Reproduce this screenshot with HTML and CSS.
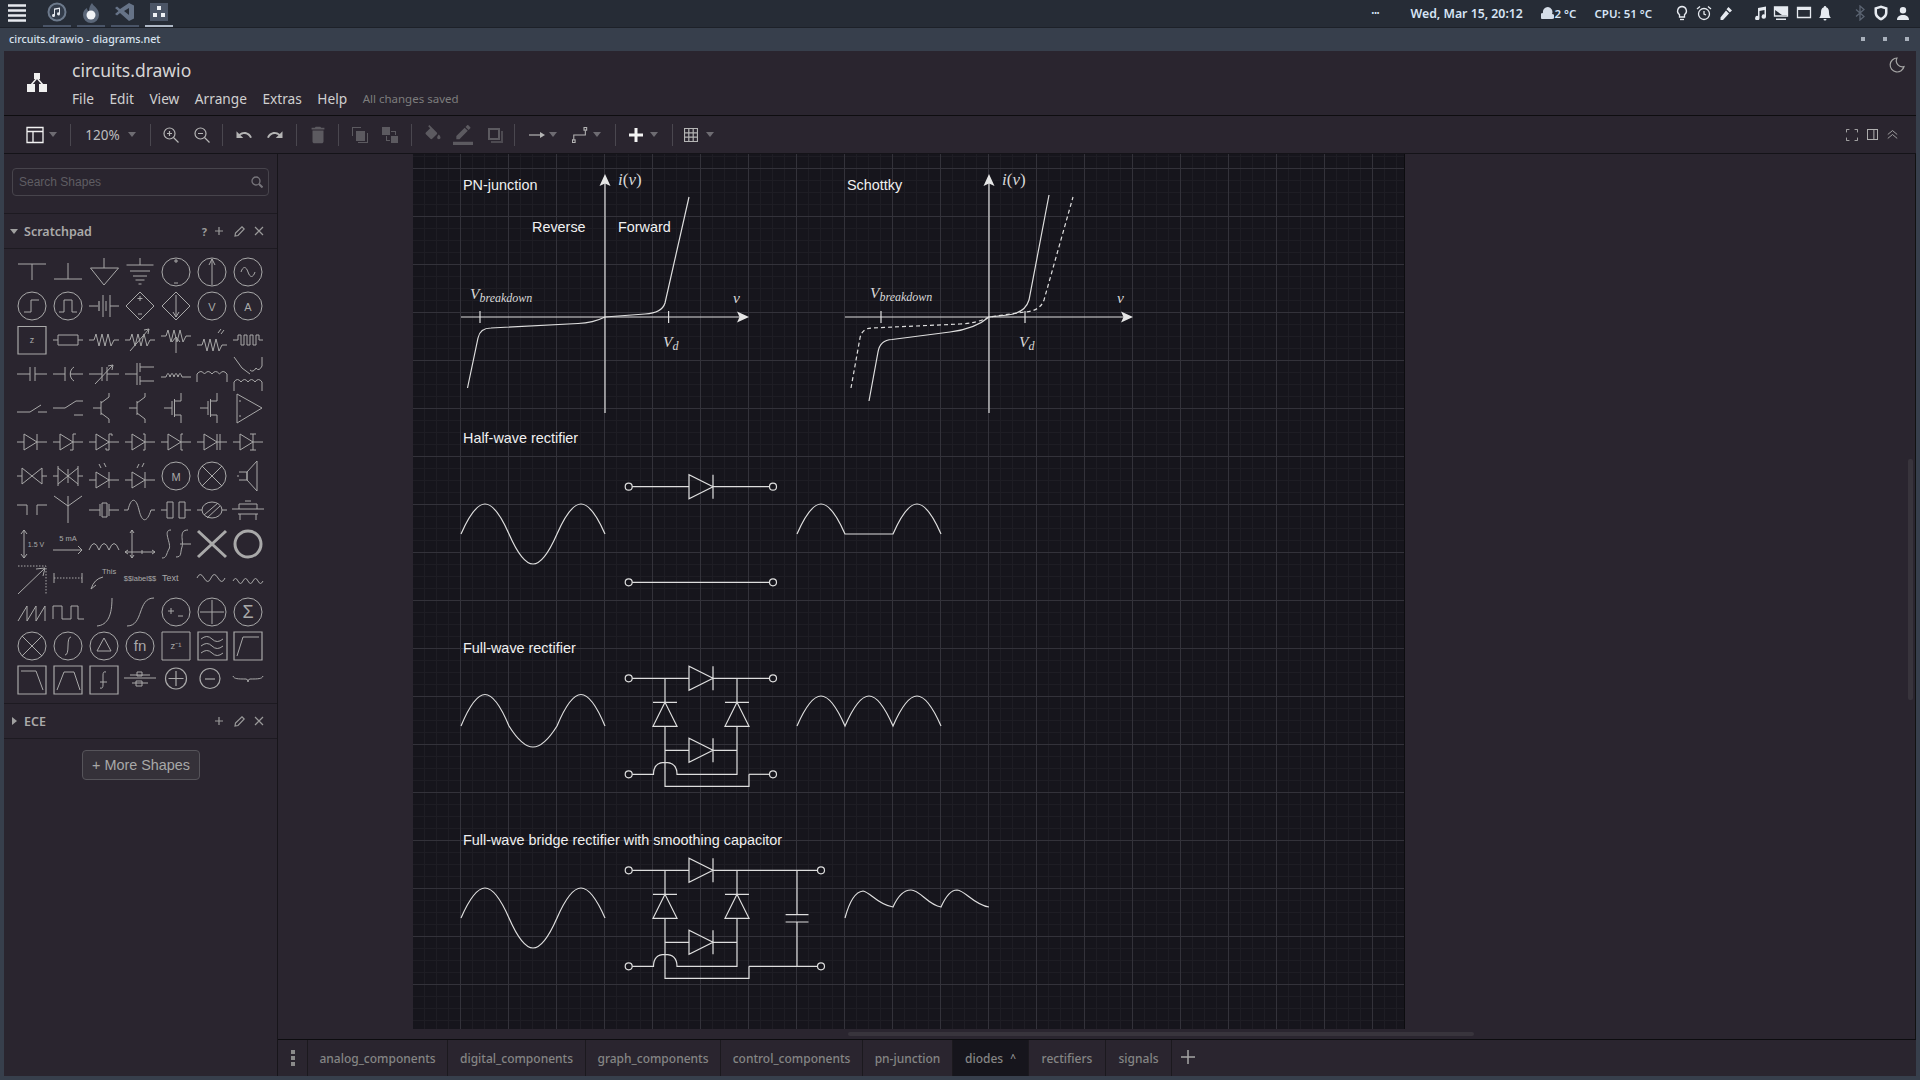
FILE: index.html
```html
<!DOCTYPE html>
<html lang="en">
<head>
<meta charset="utf-8">
<title>circuits.drawio - diagrams.net</title>
<link rel="stylesheet" href="styles.css">
</head>
<body>
<header class="topbar">
  <div class="tasks">
    <svg class="burger" width="18" height="18" viewBox="0 0 18 18"><path d="M0 1.500H18M0 6.500H18M0 11.500H18M0 16.500H18"/></svg>
    <div class="task"><svg width="20" height="20" viewBox="0 0 20 20"><circle cx="10" cy="10" r="8.500" fill="#333c4a" stroke="#6d7a8c" stroke-width="2"/><path d="M8 13.500a1.500 1.500 0 1 1-1-1.400V6.500l6-1v6.400a1.500 1.500 0 1 1-1-1.400V7l-4 .7z" fill="#e4e8ee"/></svg></div>
    <div class="task"><svg width="20" height="22" viewBox="0 0 20 22"><path d="M11 1c1 3 7 5 7 12a8 8 0 1 1-16 0c0-4 2-6 4-7 0 2 1 3 2 3 0-3 1-6 3-8z" fill="#5a6678"/><circle cx="10" cy="13" r="4.500" fill="#f0f2f5"/></svg></div>
    <div class="task"><svg width="20" height="20" viewBox="0 0 20 20"><path d="M14 1l5 2.500v13L14 19 5 11l-3 2.500L0 12l3.500-3L0 6l2-1.500 3 2.500zm0 5l-5 3 5 4z" fill="#667387"/></svg></div>
    <div class="task task-on"><svg width="18" height="18" viewBox="0 0 18 18"><rect width="18" height="18" fill="#4b5566"/><path d="M7 3h4v4H7zM3 10h4v4H3zM11 10h4v4h-4z" fill="#eef1f5"/></svg></div>
  </div>
  <div class="status">
    <span class="st-dots">•••</span>
    <span class="st-date">Wed, Mar 15, 20:12</span>
    <span class="st-temp"><svg width="13" height="14" viewBox="0 0 13 14"><path d="M7 1a5 5 0 0 0-5 6 3 3 0 0 0 0 6h9a2.500 2.500 0 0 0 0-5 5 5 0 0 0-4-7z" fill="#d5dde8"/></svg>2 °C</span>
    <span class="st-cpu">CPU: 51 °C</span>
    <div class="tray tray-a">
      <svg width="14" height="16" viewBox="0 0 14 16"><path d="M7 1.500a4.500 4.500 0 0 0-2.500 8.200V12h5V9.700A4.500 4.500 0 0 0 7 1.500z"/><path d="M5 14.500h4"/></svg>
      <svg width="16" height="16" viewBox="0 0 16 16"><circle cx="8" cy="9" r="5.500"/><path d="M1 4l3-2.500M15 4l-3-2.500M8 6v3l2 1"/></svg>
      <svg width="14" height="15" viewBox="0 0 14 15"><path class="solid" d="M9.500 1l3.500 3.500-2.200 2L7.500 3.300zM7 4.500l3 3L4 14H1.500v-2.500z"/></svg>
    </div>
    <div class="tray tray-b">
      <svg width="14" height="14" viewBox="0 0 14 14"><path class="solid" d="M5 2l8-1.500V10.500a2.200 2.200 0 1 1-1.500-2V4L6.500 5v7a2.200 2.200 0 1 1-1.500-2z"/></svg>
      <svg width="16" height="15" viewBox="0 0 16 15"><path d="M1.500 1h13v9h-13z"/><path class="solid" d="M2 1h13v8H9L2 4zM3 12.500h10V14H3z"/></svg>
      <svg width="16" height="14" viewBox="0 0 16 14"><path d="M1.500 1.500h13v10h-13z"/><path class="solid" d="M1 1h14v3H1z"/></svg>
      <svg width="14" height="15" viewBox="0 0 14 15"><path class="solid" d="M7 0a1.200 1.200 0 0 1 1.200 1.300C10.500 2 11 4 11 6.500c0 3 1 4.500 2 5.500H1c1-1 2-2.500 2-5.500C3 4 3.500 2 5.800 1.300A1.200 1.200 0 0 1 7 0zM5.500 13h3a1.500 1.500 0 0 1-3 0z"/></svg>
    </div>
    <div class="tray tray-c">
      <svg class="dim" width="10" height="16" viewBox="0 0 10 16"><path d="M1 4.500l8 7-4 3.500V1l4 3.500-8 7"/></svg>
      <svg width="14" height="16" viewBox="0 0 14 16"><path class="solid" d="M7 .5l6.500 2v5c0 4-3 6.500-6.500 8-3.500-1.500-6.500-4-6.500-8v-5zM7 3L3 4.200v3.300c0 2.500 1.800 4 4 5.200 2.200-1.200 4-2.700 4-5.200V4.200z"/></svg>
      <svg width="14" height="13" viewBox="0 0 14 13"><path class="solid" d="M7 0a3.200 3.200 0 1 1 0 6.400A3.200 3.200 0 0 1 7 0zM1 13c0-3.500 2.500-5 6-5s6 1.500 6 5z"/></svg>
    </div>
  </div>
</header>

<div class="window">
  <div class="titlebar">
    <span>circuits.drawio - diagrams.net</span>
    <div class="winbtns"><i></i><i></i><i></i></div>
  </div>
  <div class="apphead">
    <svg class="logo" width="22" height="19" viewBox="0 0 22 19"><path d="M8 0h6v6H8zM1 11h8v8H1zM13 11h8v8h-8z" fill="#f0f0f0"/><path d="M11 5L5 12M11 5l6 7" stroke="#f0f0f0" stroke-width="1.500"/></svg>
    <div class="appinfo">
      <div class="docname">circuits.drawio</div>
      <nav class="menu"><span>File</span><span>Edit</span><span>View</span><span>Arrange</span><span>Extras</span><span>Help</span><span class="saved">All changes saved</span></nav>
    </div>
    <svg class="moon" width="16" height="16" viewBox="0 0 16 16"><path d="M8 1a7 7 0 1 0 7 8.500A6 6 0 0 1 8 1z"/></svg>
  </div>
  <div class="toolbar">
    <div class="tools">
      <div class="t"><svg class="on" width="18" height="18" viewBox="0 0 18 18"><path d="M1 1.500h16v15H1zM1 5.500h16M7 5.500v11"/></svg></div>
      <div class="t"><i class="caret"></i></div>
      <div class="t"><i class="sep"></i></div>
      <div class="t zoomval">120%</div>
      <div class="t"><i class="caret"></i></div>
      <div class="t"><i class="sep"></i></div>
      <div class="t"><svg class="mid" width="18" height="18" viewBox="0 0 18 18"><circle cx="7.500" cy="7.500" r="5.500"/><path d="M11.500 11.500L16.500 16.500M7.500 5v5M5 7.500h5"/></svg></div>
      <div class="t"><svg class="mid" width="18" height="18" viewBox="0 0 18 18"><circle cx="7.500" cy="7.500" r="5.500"/><path d="M11.500 11.500L16.500 16.500M5 7.500h5"/></svg></div>
      <div class="t"><i class="sep"></i></div>
      <div class="t"><svg class="fillmid" width="18" height="18" viewBox="0 0 24 24"><path d="M12.500 8c-2.650 0-5.050.99-6.900 2.600L2 7v9h9l-3.620-3.620c1.390-1.160 3.160-1.880 5.120-1.880 3.540 0 6.550 2.310 7.600 5.500l2.370-.78C21.080 11.030 17.150 8 12.500 8z"/></svg></div>
      <div class="t"><svg class="fillmid" width="18" height="18" viewBox="0 0 24 24"><path d="M18.400 10.600C16.550 8.990 14.150 8 11.500 8c-4.650 0-8.580 3.030-9.960 7.220L3.900 16c1.050-3.190 4.050-5.500 7.600-5.500 1.950 0 3.730.72 5.120 1.880L13 16h9V7l-3.600 3.600z"/></svg></div>
      <div class="t"><i class="sep"></i></div>
      <div class="t"><svg class="filldim" width="22" height="22" viewBox="0 0 24 24"><path d="M6 19c0 1.100.9 2 2 2h8c1.100 0 2-.9 2-2V7H6v12zM19 4h-3.500l-1-1h-5l-1 1H5v2h14V4z"/></svg></div>
      <div class="t"><i class="sep"></i></div>
      <div class="t"><svg class="filldim" width="18" height="18" viewBox="0 0 18 18"><path d="M1 1h9v1H2v8H1zM5 5h9v10H5z"/><path d="M15 7h2v10H7v-1h9V7z"/></svg></div>
      <div class="t"><svg class="filldim" width="18" height="18" viewBox="0 0 18 18"><path d="M1 1h8v8H1zM10 10h7v7h-7z"/><path d="M10 5h5v4h-1V6h-4zM5 10h1v4h3v1H5z"/></svg></div>
      <div class="t"><i class="sep"></i></div>
      <div class="t"><svg class="filldim" width="20" height="20" viewBox="0 0 24 24"><path d="M16.560 8.940L7.620 0 6.210 1.410l2.380 2.380-5.150 5.150c-.59.590-.59 1.540 0 2.120l5.500 5.500c.29.290.68.440 1.060.44s.77-.15 1.060-.44l5.500-5.500c.59-.58.59-1.530 0-2.120zM19 11.500s-2 2.170-2 3.500c0 1.100.9 2 2 2s2-.9 2-2c0-1.330-2-3.500-2-3.500z"/></svg></div>
      <div class="t"><svg class="filldim" width="20" height="20" viewBox="0 0 24 24"><path d="M17.750 7L14 3.250l-10 10V17h3.750l10-10zm2.960-2.960c.39-.39.39-1.020 0-1.410L18.370.29c-.39-.39-1.020-.39-1.410 0L15 2.250 18.750 6l1.960-1.960zM0 20h24v4H0z"/></svg></div>
      <div class="t"><svg class="filldim" width="18" height="18" viewBox="0 0 18 18"><path d="M2 2h12v12H2zM4 4v8h8V4z"/><path d="M15 5h2v12H5v-2h10z" opacity=".7"/></svg></div>
      <div class="t"><i class="sep"></i></div>
      <div class="t"><svg class="mid" width="16" height="10" viewBox="0 0 16 10"><path d="M0 5h12"/><path class="tip" d="M16 5l-5-3v6z"/></svg></div>
      <div class="t"><i class="caret"></i></div>
      <div class="t"><svg class="mid" width="16" height="16" viewBox="0 0 18 18"><path d="M2 14V9h13V4"/><path d="M.5 14.500h3v3h-3zM13.500 .5h3v3h-3z"/></svg></div>
      <div class="t"><i class="caret"></i></div>
      <div class="t"><i class="sep"></i></div>
      <div class="t"><svg class="plus" width="14" height="14" viewBox="0 0 14 14"><path d="M7 0v14M0 7h14"/></svg></div>
      <div class="t"><i class="caret"></i></div>
      <div class="t"><i class="sep"></i></div>
      <div class="t"><svg class="mid" width="14" height="14" viewBox="0 0 14 14"><path d="M.5.500h13v13H.5zM.5 4.800h13M.5 9.200h13M4.800.5v13M9.200.5v13"/></svg></div>
      <div class="t"><i class="caret"></i></div>
    </div>
    <div class="viewtools">
      <svg width="12" height="12" viewBox="0 0 14 14"><path d="M.5 4V.5H4M10 .5h3.500V4M13.500 10v3.500H10M4 13.500H.5V10"/></svg>
      <svg width="11" height="11" viewBox="0 0 12 12"><path d="M.5.500h11v11H.5zM7.500.5v11"/></svg>
      <svg width="11" height="11" viewBox="0 0 14 14"><path d="M1 7l6-5 6 5M1 12l6-5 6 5"/></svg>
    </div>
  </div>
  <div class="main">
    <aside class="sidebar">
      <div class="search"><div class="searchbox"><span>Search Shapes</span><svg width="12" height="12" viewBox="0 0 12 12"><circle cx="5" cy="5" r="4"/><path d="M8 8l3.500 3.500" stroke-width="2"/></svg></div></div>
      <div class="sec"><i class="tri-d"></i><b>Scratchpad</b><div class="secbtn"><span class="q">?</span><svg viewBox="0 0 10 10" width="10" height="10"><path d="M5 1v8M1 5h8"/></svg><svg viewBox="0 0 11 11" width="11" height="11"><path d="M1 10l.5-3L8 .8l2.200 2.200L4 9.500z"/></svg><svg viewBox="0 0 10 10" width="10" height="10"><path d="M1 1l8 8M9 1l-8 8"/></svg></div></div>
      <div class="shapes">
<svg viewBox="0 0 36 34"><path d="M4 9H32M18 9V25"/></svg>
<svg viewBox="0 0 36 34"><path d="M4 24H32M18 8V24"/></svg>
<svg viewBox="0 0 36 34"><path d="M18 3V13M4.500 13H32.500L18 30Z"/></svg>
<svg viewBox="0 0 36 34"><path d="M18 3V10M4.500 10H31.500M8 16H28M11 21H25M13.500 25H22.500M16.500 29H19.500"/></svg>
<svg viewBox="0 0 36 34"><circle cx="18" cy="17" r="14"/><path d="M16 6h4M18 4v4M16 28h4"/></svg>
<svg viewBox="0 0 36 34"><circle cx="18" cy="17" r="14"/><path d="M18 30V4M15 10L18 4L21 10"/></svg>
<svg viewBox="0 0 36 34"><circle cx="18" cy="17" r="14"/><path d="M11 17c2-6 5-6 7 0s5 6 7 0"/></svg>

<svg viewBox="0 0 36 34"><circle cx="18" cy="17" r="14"/><path d="M10 23h7V11h8"/></svg>
<svg viewBox="0 0 36 34"><circle cx="18" cy="17" r="14"/><path d="M9 23h5V11h8V23h5"/></svg>
<svg viewBox="0 0 36 34"><path d="M3 17H12M24 17H33M17 6V28M20 12V22M24 6V28"/><path class="w2" d="M13 12V22"/></svg>
<svg viewBox="0 0 36 34"><path d="M4 17L18 3L32 17L18 31ZM18 7v5M15.500 9.500h5M16 25h4"/></svg>
<svg viewBox="0 0 36 34"><path d="M4 17L18 3L32 17L18 31ZM18 6V28M15 23L18 28L21 23"/></svg>
<svg viewBox="0 0 36 34"><circle cx="18" cy="17" r="14"/><text x="18" y="21.500">V</text></svg>
<svg viewBox="0 0 36 34"><circle cx="18" cy="17" r="14"/><text x="18" y="21.500">A</text></svg>

<svg viewBox="0 0 36 34"><path class="w2" d="M4 3.500H32V31H4Z"/><text class="s8" x="18" y="20">z</text></svg>
<svg viewBox="0 0 36 34"><path d="M3 17H8M8 12H28V22H8ZM28 17H33"/></svg>
<svg viewBox="0 0 36 34"><path d="M3 17H8L10 11L13 23L16 11L19 23L22 11L25 23L28 17H33"/></svg>
<svg viewBox="0 0 36 34"><path d="M3 17H8L10 11L13 23L16 11L19 23L22 11L25 23L28 17H33M8 28L27 6M22 7l5-1-1 5"/></svg>
<svg viewBox="0 0 36 34"><path d="M3 13H8L10 7L13 19L16 7L19 19L22 7L25 19L28 13H33M18 30V14M14 19L18 14L22 19"/></svg>
<svg viewBox="0 0 36 34"><path d="M3 22H8L10 16L13 28L16 16L19 28L22 16L25 28L28 22H33M24 10l3-4M27 11l3-4"/></svg>
<svg viewBox="0 0 36 34"><path d="M3 17H8V12H11V22H14V12H17V22H20V12H23V22H26V12H29V17H33"/></svg>

<svg viewBox="0 0 36 34"><path d="M3 17H16M16 10V24M21 10V24M21 17H33"/></svg>
<svg viewBox="0 0 36 34"><path d="M3 17H15M15 10V24M24 10C19 13 19 21 24 24M20 17H33"/></svg>
<svg viewBox="0 0 36 34"><path d="M3 17H16M16 10V24M21 10V24M21 17H33M9 27L27 8M22 9l5-1-1 5"/></svg>
<svg viewBox="0 0 36 34"><path d="M3 17H15M15 6V28M18 6V15M18 19V28M18 10H32M18 24H32"/></svg>
<svg viewBox="0 0 36 34"><path d="M3 20H8q2-7 4 0q2-7 4 0q2-7 4 0q2-7 4 0H33"/></svg>
<svg viewBox="0 0 36 34"><path d="M3 25V17q4-5 7.500 0q3.500-5 7.500 0q3.500-5 7.500 0q3.500-5 7.500 0V25"/></svg>
<svg viewBox="0 0 36 34"><path d="M4 34V25q3.500-5 7 0q3.500-5 7 0q3.500-5 7 0q3.500-5 7 0V34M4 0L12 11L20 17M32 0V9q-3 6-6 2q-3 5-6 2"/></svg>

<svg viewBox="0 0 36 34"><path d="M3 21H16L27 14M24 21H33"/></svg>
<svg viewBox="0 0 36 34"><path d="M3 17H15L26 10H33M24 24H33"/></svg>
<svg viewBox="0 0 36 34"><path d="M7 17H15M15 10V24M15 12L23 6V2M15 22L23 28V32"/></svg>
<svg viewBox="0 0 36 34"><path d="M7 17H15M15 10V24M15 12L23 6V2M15 22L23 28V32"/></svg>
<svg viewBox="0 0 36 34"><path d="M6 17H14M14 10V24M16.500 8V26M16.500 10H23V2M16.500 24H23V32"/></svg>
<svg viewBox="0 0 36 34"><path d="M6 17H14M14 10V24M16.500 8V26M16.500 10H23V2M16.500 24H23V32"/></svg>
<svg viewBox="0 0 36 34"><path d="M7 3L32 17L7 32ZM9 10h2M9 25h2"/></svg>

<svg viewBox="0 0 36 34"><path d="M3 17H10M10 9V25L23 17ZM23 17H33M23 9V25"/></svg>
<svg viewBox="0 0 36 34"><path d="M3 17H10M10 9V25L23 17ZM23 17H33M26 9H23V25H20"/></svg>
<svg viewBox="0 0 36 34"><path d="M3 17H10M10 9V25L23 17ZM23 17H33M26 11V9H23V25H20V23"/></svg>
<svg viewBox="0 0 36 34"><path d="M3 17H10M10 9V25L23 17ZM23 17H33M21 9H23V25H21"/></svg>
<svg viewBox="0 0 36 34"><path d="M3 17H10M10 9V25L23 17ZM23 17H33M25 9H23V25H25"/></svg>
<svg viewBox="0 0 36 34"><path d="M3 17H10M10 9V25L23 17ZM23 17H33M23 9V25M26 9V25"/></svg>
<svg viewBox="0 0 36 34"><path d="M3 17H10M10 9V25L23 17ZM23 17H33M20 9H26M23 9V25M20 25H26"/></svg>

<svg viewBox="0 0 36 34"><path d="M3 17H8M8 9V25L28 9V25ZM28 17H33"/></svg>
<svg viewBox="0 0 36 34"><path d="M3 17H8M8 7V27M8 9L28 25M8 25L28 9M28 7V27M18 10V24M28 17H33"/></svg>
<svg viewBox="0 0 36 34"><path d="M3 21H10M10 13V29L23 21ZM23 13V29M23 21H33M15 9l-2-4M20 8l-2-4"/></svg>
<svg viewBox="0 0 36 34"><path d="M3 21H10M10 13V29L23 21ZM23 13V29M23 21H33M15 9l2-4M20 8l2-4"/></svg>
<svg viewBox="0 0 36 34"><circle cx="18" cy="17" r="14"/><text x="18" y="21.500">M</text></svg>
<svg viewBox="0 0 36 34"><circle cx="18" cy="17" r="14"/><path d="M8 7L28 27M28 7L8 27"/></svg>
<svg viewBox="0 0 36 34"><path d="M9 13H17V21H9M17 13L27 2V32L17 21ZM7 17H9"/></svg>

<svg viewBox="0 0 36 34"><path d="M3 12H13V22M33 12H23V22"/></svg>
<svg viewBox="0 0 36 34"><path d="M18 30V12M4 3L18 13L32 3M18 3V13"/></svg>
<svg viewBox="0 0 36 34"><path d="M3 17H14M14 11V23M16 10H21V24H16ZM23 11V23M23 17H33"/></svg>
<svg viewBox="0 0 36 34"><path d="M2 17H6C9 4 14 4 17 17S25 30 29 17H33"/></svg>
<svg viewBox="0 0 36 34"><path d="M3 17H9M9 9H15V25H9ZM21 9H27V25H21ZM27 17H33"/></svg>
<svg viewBox="0 0 36 34"><path d="M3 17H8M28 17H33M10 22L24 10M13 25L26 13"/><ellipse cx="18" cy="17" rx="10" ry="8"/></svg>
<svg viewBox="0 0 36 34"><path d="M2 16H34M9 11H27V16M9 11V16M8 21H28M10 21V27M26 21V27M15 8h6"/></svg>

<svg viewBox="0 0 36 34"><path d="M10 3V31M7 7L10 3L13 7M7 27L10 31L13 27"/><text class="s6" x="22" y="20">1.5 V</text></svg>
<svg viewBox="0 0 36 34"><path d="M3 23H32M28 19L32 23L28 27"/><text class="s7" x="18" y="14">5 mA</text></svg>
<svg viewBox="0 0 36 34"><path d="M3 23Q8 10 13 23Q18 10 23 23Q28 10 33 23"/></svg>
<svg viewBox="0 0 36 34"><path d="M10 3V31M3 25H33M8 6L10 3L12 6M8 28L10 31L12 28M30 23L33 25L30 27M6 23L3 25L6 27M20 23V27"/></svg>
<svg viewBox="0 0 36 34"><path d="M13 3C4 3 14 17 11 22S9 31 4 31M30 3C20 3 26 14 24 20S24 30 18 30M22 17H33"/></svg>
<svg viewBox="0 0 36 34"><path class="w3" d="M4 4L32 30M32 4L4 30"/></svg>
<svg viewBox="0 0 36 34"><circle class="w3" cx="18" cy="17" r="13"/></svg>

<svg viewBox="0 0 36 34"><path d="M4 33L31 7M22 8L31 7L29 15"/><path class="dash" d="M4 5H32V33"/></svg>
<svg viewBox="0 0 36 34"><path d="M4 12V22M32 12V22"/><path class="dash" d="M4 17H32"/></svg>
<svg viewBox="0 0 36 34"><path d="M5 28Q8 18 17 16M5 28L10 24"/><text class="s7 lft" x="16" y="13">This</text></svg>
<svg viewBox="0 0 36 34"><text class="s6b" x="18" y="20">$$label$$</text></svg>
<svg viewBox="0 0 36 34"><text class="s8 lft" x="4" y="20">Text</text></svg>
<svg viewBox="0 0 36 34"><path d="M3 17q3-7 7 0t7 0q3-7 7 0t7 0"/></svg>
<svg viewBox="0 0 36 34"><path d="M3 20q2.500-5 5 0t5 0q2.500-5 5 0t5 0q2.500-5 5 0t5 0"/></svg>

<svg viewBox="0 0 36 34"><path d="M4 26L13 11V26L22 11V26L31 11V26"/></svg>
<svg viewBox="0 0 36 34"><path d="M3 24V11H12V24H21V11H28V24H34"/></svg>
<svg viewBox="0 0 36 34"><path d="M11 31C22 30 26 20 26 3"/></svg>
<svg viewBox="0 0 36 34"><path d="M5 31C22 31 15 3 32 3"/></svg>
<svg viewBox="0 0 36 34"><circle cx="18" cy="17" r="14"/><path d="M10 16h6M13 13v6M20 21h5"/></svg>
<svg viewBox="0 0 36 34"><circle cx="18" cy="17" r="14"/><path d="M18 5V29M6 17H30"/></svg>
<svg viewBox="0 0 36 34"><circle cx="18" cy="17" r="14"/><text class="s16" x="18" y="23">Σ</text></svg>

<svg viewBox="0 0 36 34"><circle cx="18" cy="17" r="14"/><path d="M8 7L28 27M28 7L8 27"/></svg>
<svg viewBox="0 0 36 34"><circle cx="18" cy="17" r="14"/><path d="M15 26q3 0 3-9t3-9"/></svg>
<svg viewBox="0 0 36 34"><circle cx="18" cy="17" r="14"/><path d="M18 9L25 22H11Z"/></svg>
<svg viewBox="0 0 36 34"><circle cx="18" cy="17" r="14"/><text class="s14" x="18" y="22">fn</text></svg>
<svg viewBox="0 0 36 34"><path d="M4 3H32V31H4Z"/><text class="s9" x="18" y="20">z⁻¹</text></svg>
<svg viewBox="0 0 36 34"><path class="w2" d="M4 3H33V31H4Z"/><path d="M7 10q6-5 11 0t11 0M7 17q6-5 11 0t11 0M7 24q6-5 11 0t11 0"/></svg>
<svg viewBox="0 0 36 34"><path class="w2" d="M4 3H32V31H4Z"/><path d="M7 27L13 8H29"/></svg>

<svg viewBox="0 0 36 34"><path class="w2" d="M4 3H32V31H4Z"/><path d="M7 8H22L29 27"/></svg>
<svg viewBox="0 0 36 34"><path class="w2" d="M4 3H32V31H4Z"/><path d="M7 27L14 9H24L30 27"/></svg>
<svg viewBox="0 0 36 34"><path class="w2" d="M4 3H32V31H4Z"/><path d="M14 19H21M20 9q-3-1-3 3v10q0 4-3 3"/></svg>
<svg viewBox="0 0 36 34"><path class="w2" d="M2 15H34M8 12H28M10 20H26"/><path d="M15 9h5v4h-5zM14 18h6v5h-6z"/></svg>
<svg viewBox="0 0 36 34"><circle class="w2" cx="18" cy="15.500" r="10.500"/><path class="w2" d="M18 8V23M10.500 15.500H25.500"/></svg>
<svg viewBox="0 0 36 34"><circle class="w2" cx="16" cy="15.500" r="10"/><path class="w2" d="M11 16H21"/></svg>
<svg viewBox="0 0 36 34"><path d="M3 13C4 16 8 16 16 16Q18 16 18 19Q18 16 20 16C28 16 32 16 33 13"/></svg>
      </div>
      <div class="sec sec-ece"><i class="tri-r"></i><b>ECE</b><div class="secbtn"><svg viewBox="0 0 10 10" width="10" height="10"><path d="M5 1v8M1 5h8"/></svg><svg viewBox="0 0 11 11" width="11" height="11"><path d="M1 10l.5-3L8 .8l2.200 2.200L4 9.500z"/></svg><svg viewBox="0 0 10 10" width="10" height="10"><path d="M1 1l8 8M9 1l-8 8"/></svg></div></div>
      <button class="more">+ More Shapes</button>
    </aside>
    <div class="right">
      <div class="canvas">
        <div class="page">
          <svg class="diagram" width="992" height="876" viewBox="413 154 992 876">
            <defs>
              <g id="axes">
                <path d="M605 413V182M461 317H740"/>
                <path class="ah" d="M605 174L610.500 186L605 183.500L599.500 186Z"/>
                <path class="ah" d="M749 317L737 322.500L739.500 317L737 311.500Z"/>
                <text class="m iv" x="618" y="185">i<tspan class="up">(</tspan>v<tspan class="up">)</tspan></text>
              </g>
              <g id="dio-r"><path d="M689 -12V12L713 0ZM713 -12V12"/></g>
              <g id="dio-u"><path d="M-12 0H12M0 0L-12 24H12Z"/></g>
              <g id="term"><circle r="3.500"/></g>
              <g id="bridge">
                <path d="M632 678.300H689M713 678.300H769M665 678.300V702.300M737 678.300V702.300M665 726.300V786.300H749V774.300M737 726.300V774.300H677c0-8-4-12-12-12s-11.500 4-11.500 12H632M665 750.300H689M713 750.300H737"/>
                <use href="#dio-r" y="678.300"/>
                <use href="#dio-r" y="750.300"/>
                <use href="#dio-u" x="665" y="702.300"/>
                <use href="#dio-u" x="737" y="702.300"/>
                <use href="#term" x="628.700" y="678.300"/>
                <use href="#term" x="628.700" y="774.300"/>
              </g>
              <path id="sine" d="M0 0c17.500-40 30.500-40 48 0c17.500 40 30.500 40 48 0c17.500-40 30.500-40 48 0"/>
            </defs>

            <text x="463" y="190">PN-junction</text>
            <text x="532" y="232">Reverse</text>
            <text x="618" y="232">Forward</text>
            <use href="#axes"/>
            <path d="M480 311V323M668.600 311V323"/>
            <path d="M467.500 388L478 338Q480 328 491 328L578 323.500Q593 323 605 317L645 314Q662 313 665 303L689 197"/>
            <text class="m" x="470" y="299">V<tspan class="sub" dy="3">breakdown</tspan></text>
            <text class="m" x="733" y="303">v</text>
            <text class="m" x="663" y="347">V<tspan class="sub" dy="3">d</tspan></text>

            <text x="847" y="190">Schottky</text>
            <use href="#axes" x="384"/>
            <path d="M881 311V323M1025 311V323"/>
            <path d="M869 401L878 352Q880 340 892 339.500L950 332Q975 329 989 317L1008 315Q1025 313 1029 300L1049 195"/>
            <path class="dashed" d="M851 388L860 338Q862 328 872 328L960 324Q978 323 989 317L1025 312Q1040 311 1044 300L1073 197"/>
            <text class="m" x="870" y="298">V<tspan class="sub" dy="3">breakdown</tspan></text>
            <text class="m" x="1117" y="303">v</text>
            <text class="m" x="1019" y="347">V<tspan class="sub" dy="3">d</tspan></text>

            <text x="463" y="443">Half-wave rectifier</text>
            <use href="#sine" x="461" y="534"/>
            <path d="M632 486.700H689M713 486.700H769.500M632 582.300H769.500"/>
            <use href="#dio-r" y="486.700"/>
            <use href="#term" x="628.700" y="486.700"/>
            <use href="#term" x="773" y="486.700"/>
            <use href="#term" x="628.700" y="582.300"/>
            <use href="#term" x="773" y="582.300"/>
            <path d="M797 534c17.500-40 30.500-40 48 0H893c17.500-40 30.500-40 48 0"/>

            <text x="463" y="653">Full-wave rectifier</text>
            <path d="M461 726c17.500-42 30.500-42 48 0c17.500 28 30.500 28 48 0c17.500-42 30.500-42 48 0"/>
            <use href="#bridge"/>
            <path d="M749 774.300H769.500"/>
            <use href="#term" x="773" y="678.300"/>
            <use href="#term" x="773" y="774.300"/>
            <path d="M797 726c17.500-40 30.500-40 48 0c17.500-40 30.500-40 48 0c17.500-40 30.500-40 48 0"/>

            <text x="463" y="845">Full-wave bridge rectifier with smoothing capacitor</text>
            <use href="#sine" x="461" y="918"/>
            <use href="#bridge" y="192"/>
            <path d="M769 870.300H817.500M797 870.300V914.700M785.600 914.700H808.500M785.600 922H808.500M797 922V966.300M749 966.300H817.500"/>
            <use href="#term" x="821" y="870.300"/>
            <use href="#term" x="821" y="966.300"/>
            <path d="M845 918Q852 892 863 891C870 892 878 905 893 907C897 898 903 890 911 890C920 890 928 905 941 907C945 898 950 890 957 890C966 891 974 905 989 907"/>
          </svg>
        </div>
        <i class="hscroll"></i>
        <i class="vscroll"></i>
      </div>
      <div class="tabs">
        <div class="tab"><svg width="4" height="16" viewBox="0 0 4 16"><path d="M0 0h4v4H0zM0 6h4v4H0zM0 12h4v4H0z"/></svg></div>
        <div class="tab">analog_components</div>
        <div class="tab">digital_components</div>
        <div class="tab">graph_components</div>
        <div class="tab">control_components</div>
        <div class="tab">pn-junction</div>
        <div class="tab tab-on">diodes <span class="hat">^</span></div>
        <div class="tab">rectifiers</div>
        <div class="tab">signals</div>
        <div class="addtab"><svg width="14" height="14" viewBox="0 0 14 14"><path d="M7 0v14M0 7h14"/></svg></div>
      </div>
    </div>
  </div>
</div>
</body>
</html>
```

FILE: styles.css
```css
* { box-sizing: border-box; }
html, body { margin: 0; height: 100%; }
body {
  width: 1920px; height: 1080px; overflow: hidden;
  display: flex; flex-direction: column;
  background: #373f4c;
  font-family: "Noto Sans", "Liberation Sans", sans-serif;
}

/* desktop panel */
.topbar { height: 28px; flex: none; background: #262c36; border-bottom: 1px solid #1d2129; display: flex; justify-content: space-between; }
.tasks { display: flex; align-items: flex-start; padding-left: 8px; }
.burger { margin: 4px 17px 0 0; fill: none; stroke: #e6e9ee; stroke-width: 2.500; }
.task { width: 28px; height: 27px; margin-right: 6px; display: flex; justify-content: center; align-items: flex-start; padding-top: 2px; border-bottom: 2px solid #4a5568; }
.task-on { border-bottom-color: #aeb8c6; padding-top: 3px; }
.status { display: flex; align-items: center; color: #d6e4f5; font-size: 11.500px; font-weight: 600; padding-right: 10px; padding-bottom: 1px; }
.st-dots { font-size: 7px; width: 22px; margin-right: 17px; letter-spacing: 0; }
.st-date { width: 130px; font-size: 12.300px; }
.st-temp { width: 54px; display: flex; align-items: center; gap: 1px; }
.st-cpu { width: 80px; }
.tray { display: flex; align-items: center; }
.tray svg { fill: none; stroke: #e6eaf0; stroke-width: 1.300; }
.tray .solid { fill: #e6eaf0; stroke: none; }
.tray .dim { stroke: #5b6472; }
.tray-a { gap: 7px; margin-right: 20px; }
.tray-b { gap: 6.500px; margin-right: 23px; }
.tray-c { gap: 8.500px; }

/* window */
.window { flex: 1; min-height: 0; display: flex; flex-direction: column; padding: 0 4px 4px; }
.titlebar { height: 23px; margin: 0 -4px; padding: 0 9px 2px; flex: none; display: flex; justify-content: space-between; align-items: center; color: #d8e2ee; font-size: 10.700px; font-weight: 500; }
.winbtns { display: flex; gap: 18px; padding-right: 2px; }
.winbtns i { width: 4px; height: 4px; background: #a9b1bc; }

.apphead { height: 65px; flex: none; background: #2a252f; border-bottom: 1px solid #0e0d10; display: flex; position: relative; }
.logo { margin: 22px 0 0 22px; }
.appinfo { margin-left: 24px; }
.docname { font-size: 17.500px; color: #d6d6d6; line-height: 22px; margin-top: 8px; }
.menu { display: flex; margin-top: 8px; font-size: 13.700px; color: #d0d0d0; line-height: 20px; }
.menu span { margin-right: 15.500px; }
.menu .saved { font-size: 11.500px; color: #7d7d7d; margin-left: 0; }
.moon { position: absolute; right: 11px; top: 6px; fill: none; stroke: #a5a5a5; stroke-width: 1.200; }

.toolbar { height: 38px; flex: none; background: #2a252f; border-bottom: 1px solid #141318; display: flex; justify-content: space-between; align-items: center; }
.tools {
  display: grid; align-items: center; padding-left: 30.500px;
  grid-template-columns: 18.500px 17px 32.500px 29.500px 18px 21px 31px 20px 22px 31px 21px 22px 20px 22px 30px 21px 22px 30px 32px 19px 23px 16px 27px 17px 18px 21px 18px 18px 19px 19px 10px;
}
.t { width: 0; display: flex; justify-content: center; align-items: center; color: #bdbdbd; font-size: 13.500px; white-space: nowrap; }
.t svg { flex: none; fill: none; }
.on { stroke: #f2f2f2; stroke-width: 1.300; }
.mid { stroke: #b5b5b5; stroke-width: 1.200; }
.mid .tip { fill: #b5b5b5; stroke: none; }
.fillmid { fill: #b5b5b5 !important; }
.filldim { fill: #5c5a60 !important; }
.plus { stroke: #f4f4f4; stroke-width: 3; }
.caret { display: block; flex: none; width: 0; height: 0; border: 4px solid transparent; border-top: 5px solid #6e6c72; border-bottom: 0; }
.sep { display: block; flex: none; width: 1px; height: 22px; background: #4a474f; }
.viewtools { display: flex; align-items: center; gap: 9px; padding-right: 18px; }
.viewtools svg { fill: none; stroke: #b0b0b0; stroke-width: 1.100; }

.main { flex: 1; min-height: 0; display: flex; }
.sidebar { width: 274px; flex: none; background: #2a252f; border-right: 1px solid #17151a; color: #a8a8a8; }
.search { height: 60px; padding: 14px 8px 0; border-bottom: 1px solid #1d1a21; }
.searchbox { height: 28px; border: 1px solid #47444c; border-radius: 4px; display: flex; align-items: center; justify-content: space-between; padding: 0 5px 0 6px; font: 12px "Liberation Sans", sans-serif; color: #5f5d63; }
.searchbox svg { fill: none; stroke: #77757b; stroke-width: 1.300; }
.sec { height: 35px; display: flex; align-items: center; border-bottom: 1px solid #1d1a21; position: relative; padding-left: 20px; }
.sec b { font-size: 12.500px; font-weight: 600; color: #aaa; }
.tri-d { position: absolute; left: 6px; top: 15px; border: 4px solid transparent; border-top: 5px solid #a0a0a0; border-bottom: 0; }
.tri-r { position: absolute; left: 8px; top: 13px; border: 4px solid transparent; border-left: 5px solid #a0a0a0; border-right: 0; }
.secbtn { margin-left: auto; display: flex; align-items: center; gap: 9.500px; padding-right: 13px; }
.secbtn svg { fill: none; stroke: #9a9a9a; stroke-width: 1.200; }
.q { font-size: 11px; font-weight: 700; color: #9a9a9a; margin-right: -2.500px; }
.shapes { display: grid; grid-template-columns: repeat(7, 36px); grid-auto-rows: 34px; padding: 6px 0 6px 10px; border-bottom: 1px solid #1d1a21; }
.shapes svg { width: 36px; height: 34px; display: block; overflow: visible; fill: none; stroke: #a9a9a9; stroke-width: 1; }
.shapes text { fill: #a9a9a9; stroke: none; font: 11px "Liberation Sans", sans-serif; text-anchor: middle; }
.shapes .w2 { stroke-width: 1.200; }
.shapes .w3 { stroke-width: 3; }
.shapes .dash { stroke-dasharray: 1.500 1.500; }
.shapes .s6 { font-size: 7px; }
.shapes .s6b { font-size: 7.500px; }
.shapes .s7 { font-size: 7.500px; }
.shapes .s8 { font-size: 9px; }
.shapes .s9 { font-size: 9.500px; }
.shapes .s14 { font-size: 15px; }
.shapes .s16 { font-size: 18px; }
.shapes .lft { text-anchor: start; }
.more { display: block; margin: 11px 0 0 78px; width: 118px; height: 30px; background: #353139; border: 1px solid #56545a; border-radius: 4px; color: #a8a8a8; font: 14.400px "Liberation Sans", sans-serif; padding: 0; }

.right { flex: 1; min-width: 0; display: flex; flex-direction: column; }
.canvas { flex: 1; min-height: 0; background: #2a252f; padding: 0 510px 10px 135px; position: relative; border-right: 1px solid #111; }
.page {
  height: 100%; border-right: 1px solid #0c0c0f;
  background-color: #16151c;
  background-image:
    linear-gradient(to right, #33323a 1px, transparent 1px),
    linear-gradient(to bottom, #33323a 1px, transparent 1px),
    linear-gradient(to right, #1e1d24 1px, transparent 1px),
    linear-gradient(to bottom, #1e1d24 1px, transparent 1px);
  background-size: 48px 48px, 48px 48px, 12px 12px, 12px 12px;
  background-position: 47px 14px, 47px 14px, 11px 2px, 11px 2px;
}
.diagram { display: block; fill: none; stroke: #dedede; stroke-width: 1.200; }
.diagram text { fill: #f0f0f0; stroke: none; font: 14.400px "Liberation Sans", sans-serif; }
.diagram .m { font: italic 15.500px "Liberation Serif", serif; fill: #d8d8d8; }
.diagram .iv { font-size: 17px; }
.diagram .up { font-style: normal; }
.diagram .sub { font-size: 12px; }
.diagram .dashed { stroke-dasharray: 4 3; }
.diagram .ah { fill: #e6e6e6; stroke: none; }
#term circle { fill: #16151c; }
.hscroll { position: absolute; left: 570px; width: 626px; bottom: 3px; height: 4px; border-radius: 2px; background: #38343c; }
.vscroll { position: absolute; right: 2px; top: 305px; width: 5px; height: 241px; border-radius: 2px; background: #38343c; }

.tabs {
  height: 37px; flex: none; background: #2a252f; border-top: 1px solid #0c0c0f;
  display: grid; grid-template-columns: 30px 140px 138px 135px 142px 90px 76px 77px 66px 32px; color: #858585; font-size: 12px; font-weight: 500;
}
.tab { display: flex; align-items: center; justify-content: center; border-right: 1px solid #1b191e; white-space: nowrap; }
.tab svg { fill: #8a8a8a; }
.tab-on { background: #16151c; gap: 7px; }
.hat { font-size: 10px; color: #999; }
.addtab { display: flex; align-items: center; justify-content: center; padding-bottom: 3px; }
.addtab svg { fill: none; stroke: #a5a5a5; stroke-width: 1.500; }
```
